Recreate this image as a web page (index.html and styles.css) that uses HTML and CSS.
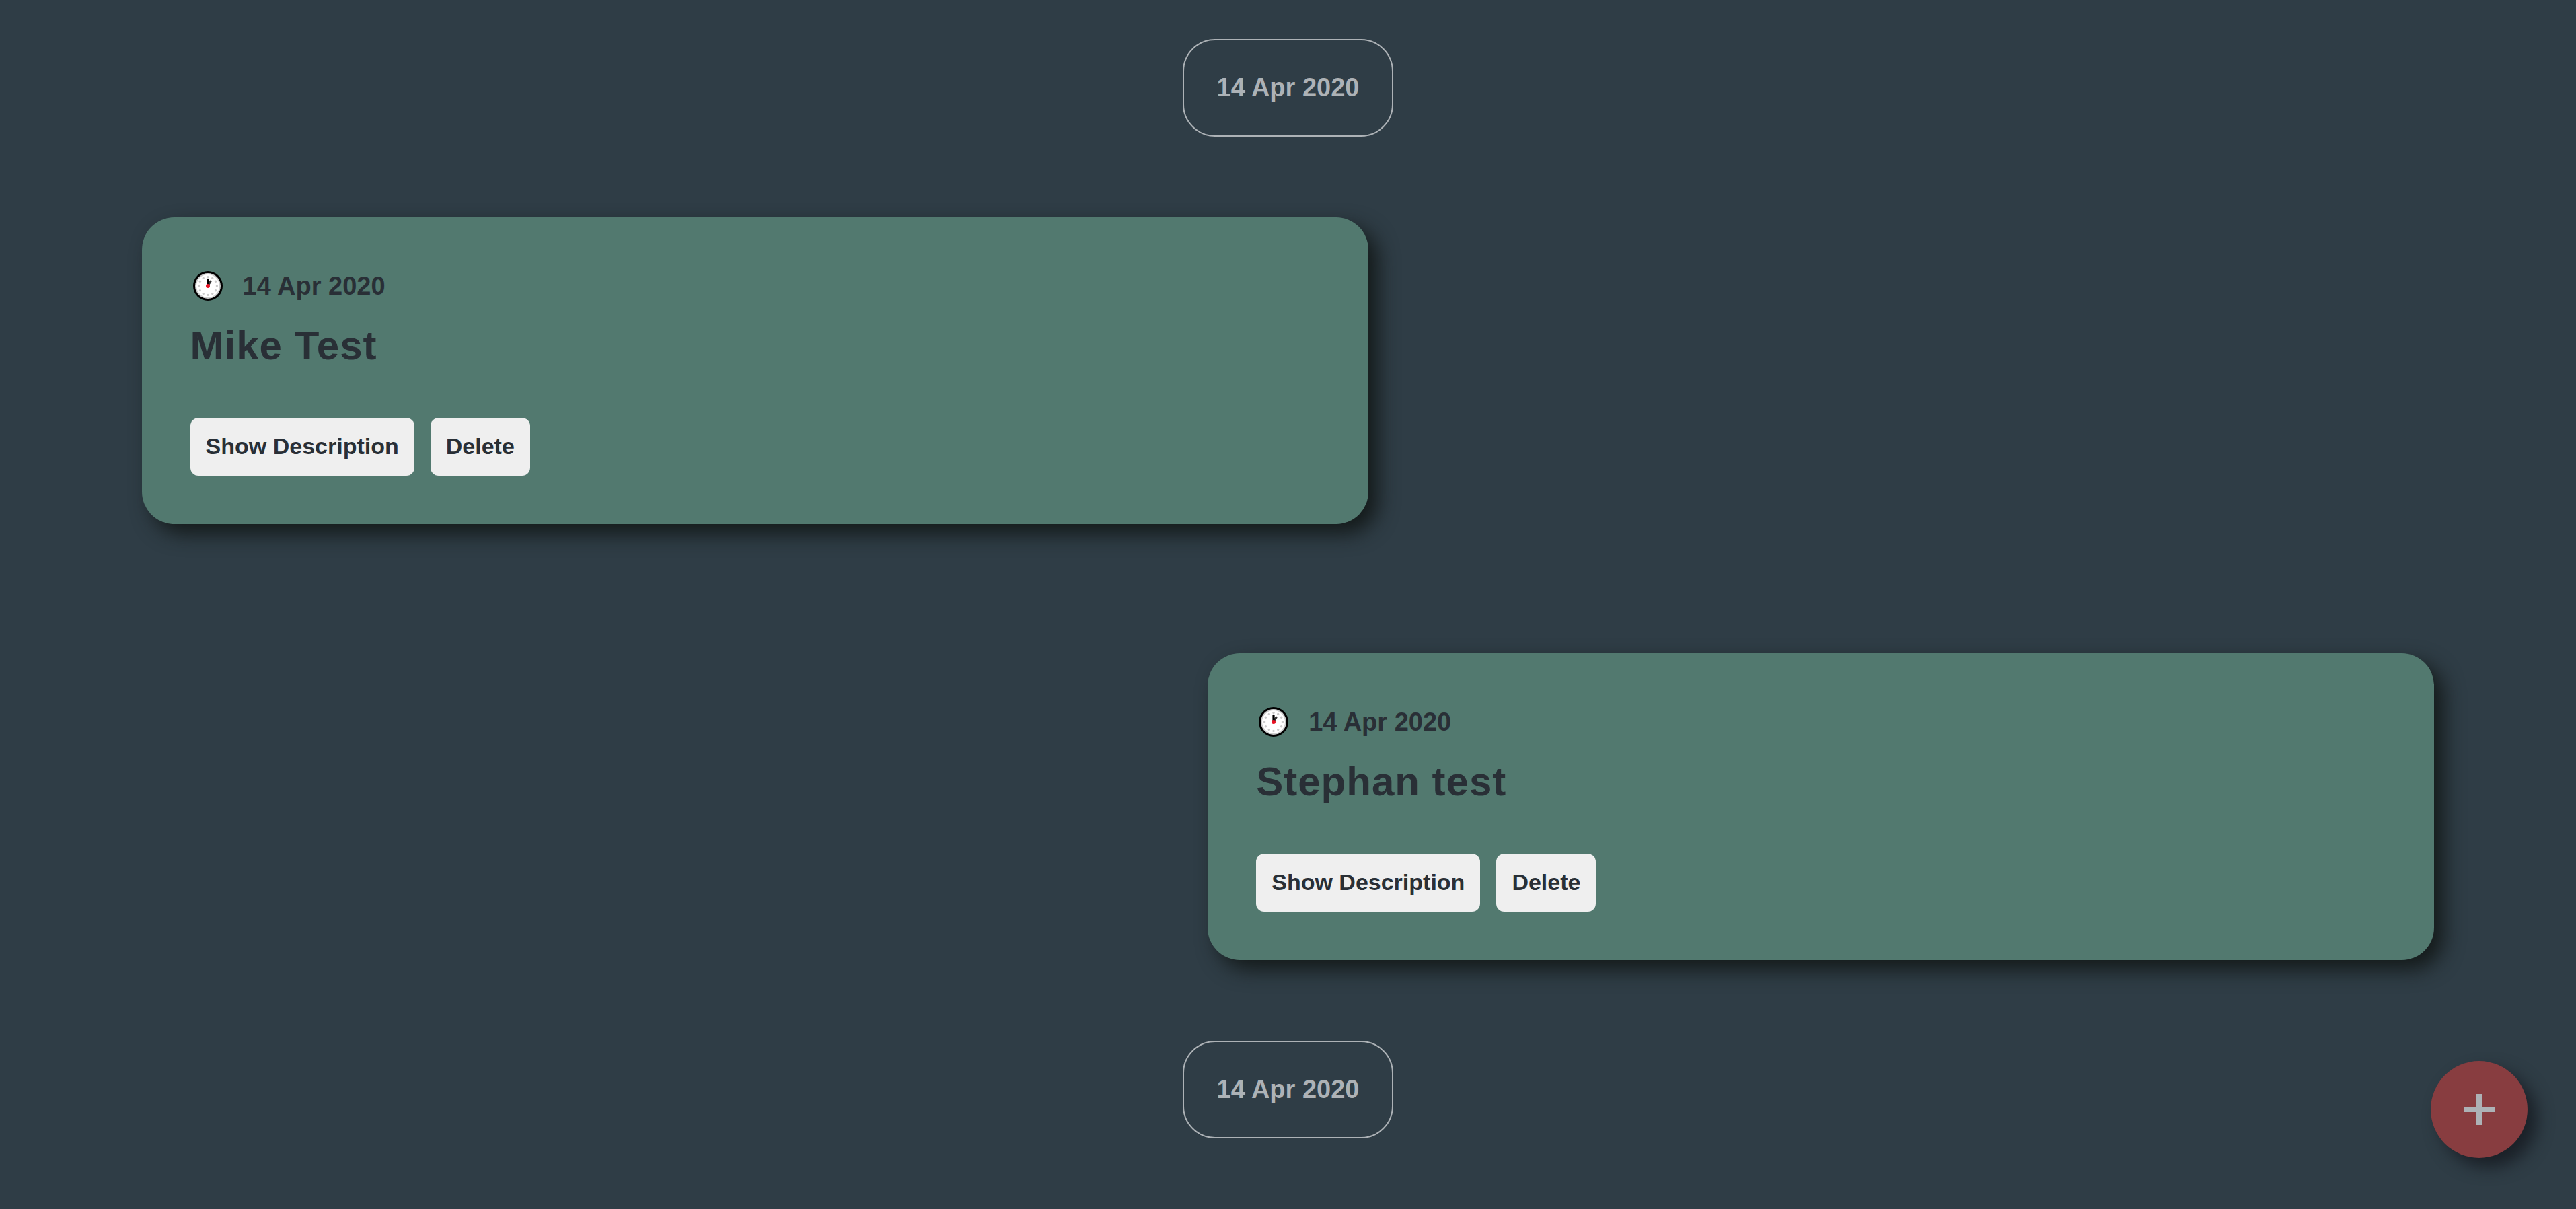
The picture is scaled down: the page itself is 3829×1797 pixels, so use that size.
FILE: index.html
```html
<!DOCTYPE html>
<html lang="en">
<head>
<meta charset="utf-8">
<meta name="viewport" content="width=device-width, initial-scale=1">
<title>Timeline</title>
<link rel="stylesheet" href="styles.css">
</head>
<body>
<svg class="symbols" aria-hidden="true">
  <symbol id="clock" viewBox="0 0 44 44">
    <circle cx="22" cy="22" r="22" fill="#000"/>
    <circle cx="22" cy="22" r="19" fill="#ccc"/>
    <circle cx="22" cy="22" r="17" fill="#fff"/>
    <g fill="#ccc">
      <circle cx="22" cy="8.6" r="1.7"/><circle cx="28.7" cy="10.4" r="1.7"/><circle cx="33.6" cy="15.3" r="1.7"/>
      <circle cx="35.4" cy="22" r="1.7"/><circle cx="33.6" cy="28.7" r="1.7"/><circle cx="28.7" cy="33.6" r="1.7"/>
      <circle cx="22" cy="35.4" r="1.7"/><circle cx="15.3" cy="33.6" r="1.7"/><circle cx="10.4" cy="28.7" r="1.7"/>
      <circle cx="8.6" cy="22" r="1.7"/><circle cx="10.4" cy="15.3" r="1.7"/><circle cx="15.3" cy="10.4" r="1.7"/>
    </g>
    <path d="M22 21L26 15.2" stroke="#333" stroke-width="3.2" stroke-linecap="round"/>
    <path d="M22 21V12.4" stroke="#000" stroke-width="3.2" stroke-linecap="round"/>
    <circle cx="22" cy="22" r="3" fill="#e81224"/>
  </symbol>
</svg>
<main class="timeline">
  <time class="marker" datetime="2020-04-14">14 Apr 2020</time>
  <ul class="events">
    <li class="card">
      <div class="when"><svg class="clock" aria-hidden="true"><use href="#clock"/></svg><time datetime="2020-04-14">14 Apr 2020</time></div>
      <h2 class="title">Mike Test</h2>
      <div class="actions">
        <button class="action" type="button">Show Description</button>
        <button class="action" type="button">Delete</button>
      </div>
    </li>
    <li class="card">
      <div class="when"><svg class="clock" aria-hidden="true"><use href="#clock"/></svg><time datetime="2020-04-14">14 Apr 2020</time></div>
      <h2 class="title">Stephan test</h2>
      <div class="actions">
        <button class="action" type="button">Show Description</button>
        <button class="action" type="button">Delete</button>
      </div>
    </li>
  </ul>
  <time class="marker" datetime="2020-04-14">14 Apr 2020</time>
</main>
<button class="add" type="button" aria-label="Add event">
  <svg class="plus" viewBox="0 0 46 46" aria-hidden="true"><path d="M19 0h8v19h19v8H27v19h-8V27H0v-8h19z"/></svg>
</button>
</body>
</html>
```

FILE: styles.css
```css
:root {
  --background: #2f3d46;
  --card: #52796f;
  --ink: #292f36;
  --light: #adb2b6;
}

* {
  box-sizing: border-box;
}

body {
  margin: 0;
  min-height: 100vh;
  background: var(--background);
  color: var(--ink);
  font-family: "Liberation Sans", Arial, sans-serif;
  font-size: 38px;
  font-weight: 700;
}

.symbols {
  display: none;
}

.timeline {
  display: flex;
  flex-direction: column;
  align-items: center;
  gap: 120px;
  padding: 58px 5.5% 72px;
}

.marker {
  padding: 48px 49px;
  border: 2px solid var(--light);
  border-radius: 48px;
  color: var(--light);
  line-height: 45px;
}

.events {
  display: flex;
  flex-direction: column;
  gap: 192px;
  width: 100%;
  margin: 0;
  padding: 0;
  list-style: none;
}

.card {
  width: 53.5%;
  padding: 72px;
  border-radius: 48px;
  background: var(--card);
  box-shadow: 14px 14px 30px #141a1a;
}

.card:nth-child(even) {
  align-self: flex-end;
}

.when {
  display: flex;
  align-items: center;
  gap: 30px;
  padding-left: 4px;
  line-height: 60px;
}

.clock {
  width: 44px;
  height: 44px;
}

.title {
  margin: 24px 0 72px;
  font-size: 60px;
  line-height: 70px;
  letter-spacing: 1px;
}

.actions {
  display: flex;
  flex-wrap: wrap;
  gap: 24px;
}

.action {
  padding: 23px 23px 25px;
  border: 0;
  border-radius: 12px;
  background: #efefef;
  color: var(--ink);
  font: inherit;
  font-size: 34px;
  line-height: 38px;
  cursor: pointer;
}

.add {
  position: fixed;
  right: 72px;
  bottom: 76px;
  display: grid;
  place-items: center;
  width: 144px;
  height: 144px;
  padding: 0;
  border: 0;
  border-radius: 50%;
  background: #883d40;
  box-shadow: 14px 14px 24px #1a2027;
  cursor: pointer;
}

.plus {
  width: 46px;
  height: 46px;
  fill: var(--light);
}
```
